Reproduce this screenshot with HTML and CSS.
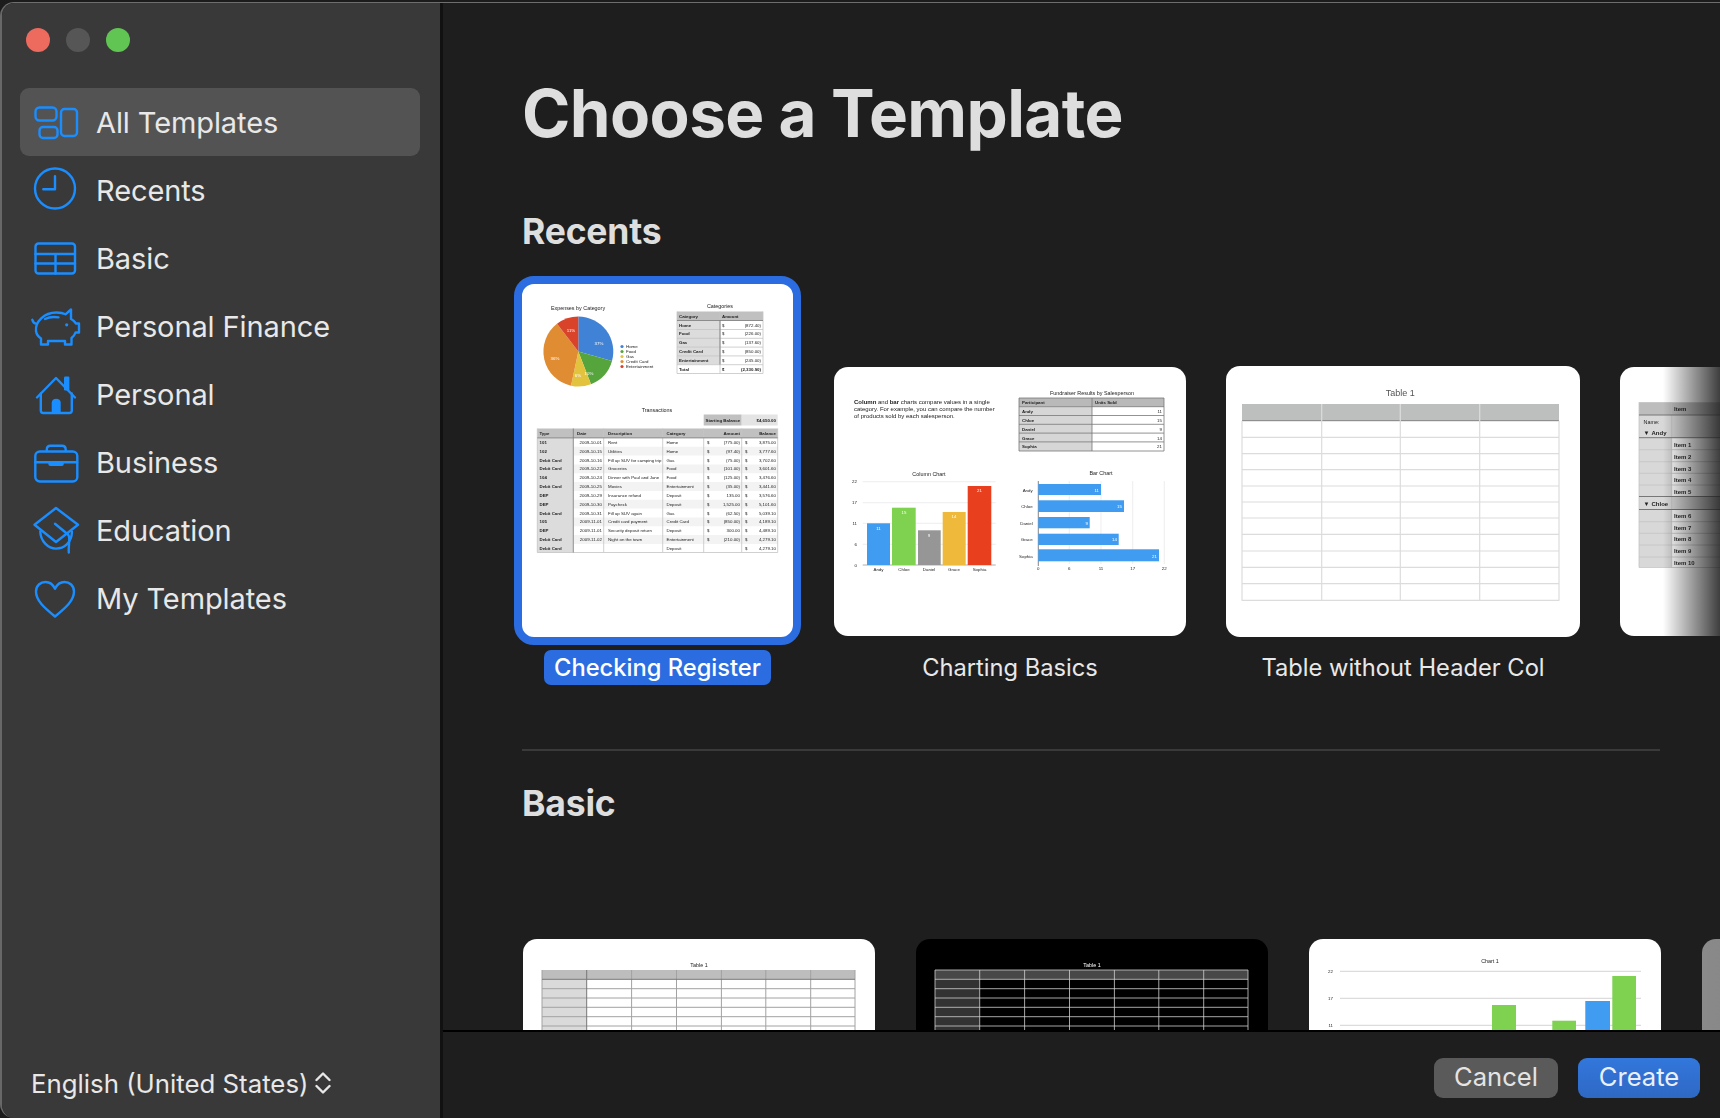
FILE: index.html
```html
<!DOCTYPE html>
<html lang="en">
<head>
<meta charset="utf-8">
<title>Choose a Template</title>
<link rel="stylesheet" href="styles.css">
</head>
<body>
<div class="window">
  <aside class="sidebar">
    <div class="lights"><span class="light red"></span><span class="light grey"></span><span class="light green"></span></div>
    <nav class="nav">
      <a class="nav-row active">
        <svg class="ico" viewBox="0 0 44 44"><rect x="1.5" y="7.5" width="21" height="13" rx="4"/><rect x="5.5" y="27" width="18" height="11" rx="3.5"/><rect x="27" y="9" width="16" height="27" rx="3.5"/></svg>
        <span>All Templates</span>
      </a>
      <a class="nav-row">
        <svg class="ico" viewBox="0 0 44 44"><circle cx="21" cy="20.5" r="20"/><path d="M21 8.2V21.2H9.3"/></svg>
        <span>Recents</span>
      </a>
      <a class="nav-row">
        <svg class="ico" viewBox="0 0 44 44"><rect x="1.5" y="7.5" width="39.5" height="30" rx="3"/><path d="M1.5 18H41M1.5 27.5H41M21.5 18V37.5"/></svg>
        <span>Basic</span>
      </a>
      <a class="nav-row">
        <svg class="ico" viewBox="0 0 44 44"><path d="M-1.7 15.8C-1 18 0 19.5 2.5 19.8M2 27C1 18 10 8.5 22.5 8.5C26 8.5 29 9 31.5 10.3L37 5.5V15C39.5 16.2 41 18 42 19.5H45V28.5H41.5C40.8 30.8 39.5 32.5 37.5 34V40.5H31V37H14V40.5H7V34.5C4 32.5 2.4 30 2 27Z"/><path d="M11 15C15 13 20 12.6 24.5 13.4"/><circle class="fill" cx="32.7" cy="20.8" r="1.6"/></svg>
        <span>Personal Finance</span>
      </a>
      <a class="nav-row">
        <svg class="ico" viewBox="0 0 44 44"><path d="M3 25.5L22 6L41 25.5"/><path d="M6.8 21.5V38.5C6.8 40.2 7.8 41 9.3 41H35.2C36.8 41 37.8 40.2 37.8 38.5V21.5"/><path class="fill" d="M17.7 41V30.8C17.7 28.4 19.7 26.8 22.2 26.8C24.7 26.8 26.7 28.4 26.7 30.8V41Z"/><rect class="fill" x="30" y="4.5" width="5.4" height="14" rx="1.2"/></svg>
        <span>Personal</span>
      </a>
      <a class="nav-row">
        <svg class="ico" viewBox="0 0 44 44"><rect x="1.3" y="11.5" width="42" height="30" rx="4.5"/><path d="M12.8 11V9.5C12.8 7 14.3 5.8 16.5 5.8H28C30.2 5.8 31.7 7 31.7 9.5V11"/><path d="M1.3 22.2H43"/><rect class="fill" x="14.3" y="21" width="15.5" height="5" rx="2"/></svg>
        <span>Business</span>
      </a>
      <a class="nav-row">
        <svg class="ico" viewBox="0 0 44 44"><path d="M22 0L44 16.8L22 34L0.5 16.8Z"/><path d="M6.3 23.5C6.5 33 14 40.6 22 40.6C30 40.6 37.5 35 38 24"/><path d="M21 15.8L34 26.5C37 29.2 34 38 34.8 44.5"/></svg>
        <span>Education</span>
      </a>
      <a class="nav-row">
        <svg class="ico" viewBox="0 0 44 44"><path d="M21 40.5C10 31.5 2 24.5 2 15.5C2 9.5 6.5 6 11.5 6C15.5 6 19 8.5 21 12.8C23 8.5 26.5 6 30.5 6C35.5 6 40 9.5 40 15.5C40 24.5 32 31.5 21 40.5Z"/></svg>
        <span>My Templates</span>
      </a>
    </nav>
    <div class="lang">
      <span>English (United States)</span>
      <svg class="updown" viewBox="0 0 16 22"><path d="M1.5 8L8 1.5L14.5 8M1.5 14L8 20.5L14.5 14"/></svg>
    </div>
  </aside>

  <main class="main">
    <div class="scroll">
      <h1 class="title">Choose a Template</h1>
      <h2 class="section">Recents</h2>
      <div class="row recents">
        <figure class="tpl selected">
          <div class="thumb">
            <svg class="art" viewBox="0 0 271 352">
              <text class="t55 c" x="56" y="25.5">Expenses by Category</text>
              <path fill="#3f82d6" d="M56.3 32A35 35 0 0 1 90 76.5L56.3 67Z"/>
              <path fill="#56a53c" d="M90 76.5A35 35 0 0 1 69 99.7L56.3 67Z"/>
              <path fill="#e3c33e" d="M69 99.7A35 35 0 0 1 49 101.2L56.3 67Z"/>
              <path fill="#e08c33" d="M49 101.2A35 35 0 0 1 35 39.3L56.3 67Z"/>
              <path fill="#d9432a" d="M35 39.3A35 35 0 0 1 56.3 32V67Z"/>
              <text class="t c w" x="77" y="60">37%</text><text class="t c w" x="67" y="90">10%</text><text class="t c w" x="56" y="92">6%</text><text class="t c w" x="33" y="75">36%</text><text class="t c w" x="49" y="47">11%</text>
              <circle cx="100" cy="62" r="1.6" fill="#3f82d6"/><circle cx="100" cy="67" r="1.6" fill="#56a53c"/><circle cx="100" cy="72" r="1.6" fill="#e3c33e"/><circle cx="100" cy="77" r="1.6" fill="#e08c33"/><circle cx="100" cy="82" r="1.6" fill="#d9432a"/>
              <text class="t" x="104" y="63.6">Home</text><text class="t" x="104" y="68.6">Food</text><text class="t" x="104" y="73.6">Gas</text><text class="t" x="104" y="78.6">Credit Card</text><text class="t" x="104" y="83.6">Entertainment</text>

              <text class="t55 c" x="198" y="23.5">Categories</text>
              <rect x="155" y="27" width="86" height="9" fill="#c0c0c0"/><rect x="155" y="36" width="43" height="44" fill="#dcdcdc"/>
              <path class="ln" d="M155 45H241M155 53.8H241M155 62.6H241M155 71.4H241M155 80.2H241M155 89H241M155 27V89M198 27V89M241 27V89"/>
              <path class="ln dk" d="M155 36H241M198 36V80"/>
              <text class="t b" x="157" y="33.3">Category</text><text class="t b" x="200" y="33.3">Amount</text>
              <g class="t b"><text x="157" y="42">Home</text><text x="157" y="50.8">Food</text><text x="157" y="59.6">Gas</text><text x="157" y="68.4">Credit Card</text><text x="157" y="77.2">Entertainment</text><text x="157" y="86">Total</text></g>
              <text class="t" x="200" y="42">$</text><text class="t e" x="239" y="42">(872.40)</text>
              <text class="t" x="200" y="50.8">$</text><text class="t e" x="239" y="50.8">(226.00)</text>
              <text class="t" x="200" y="59.6">$</text><text class="t e" x="239" y="59.6">(137.60)</text>
              <text class="t" x="200" y="68.4">$</text><text class="t e" x="239" y="68.4">(850.00)</text>
              <text class="t" x="200" y="77.2">$</text><text class="t e" x="239" y="77.2">(245.00)</text>
              <text class="t b" x="200" y="86">$</text><text class="t b e" x="239" y="86">(2,330.90)</text>

              <text class="t55 c" x="135" y="127.5">Transactions</text>
              <rect x="181.7" y="130" width="38" height="11" fill="#c0c0c0"/><rect x="219.7" y="130" width="36" height="11" fill="#e4e4e4"/>
              <text class="t b" x="183.5" y="137.3">Starting Balance</text><text class="t b e" x="254" y="137.3">$4,650.00</text>
              <rect x="15.3" y="144" width="240.4" height="9.4" fill="#c0c0c0"/><rect x="15.3" y="153.4" width="36" height="114.6" fill="#dcdcdc"/>
              <path fill="#f3f3f3" d="M51.3 162.2H255.7V171H51.3ZM51.3 179.9H255.7V188.7H51.3ZM51.3 197.5H255.7V206.4H51.3ZM51.3 215.2H255.7V224H51.3ZM51.3 232.9H255.7V241.7H51.3ZM51.3 250.5H255.7V259.4H51.3Z"/>
              <path class="ln" d="M15.3 144V268M81.7 144V268M140.7 144V268M181.7 144V268M219.7 144V268M255.7 144V268M15.3 268H255.7"/>
              <path class="ln dk" d="M15.3 153.4H255.7M51.3 144V268"/>
              <g class="t b"><text x="17.5" y="150.5">Type</text><text x="55" y="150.5">Date</text><text x="86" y="150.5">Description</text><text x="144.5" y="150.5">Category</text><text class="e" x="218" y="150.5">Amount</text><text class="e" x="254" y="150.5">Balance</text></g>
              <g transform="translate(0 159.3)"><text class="t b" x="17.5">101</text><text class="t e" x="80">2009-10-01</text><text class="t" x="86">Rent</text><text class="t" x="144.5">Home</text><text class="t" x="185">$</text><text class="t e" x="218">(775.00)</text><text class="t" x="223">$</text><text class="t e" x="254">3,875.00</text></g>
              <g transform="translate(0 168.1)"><text class="t b" x="17.5">102</text><text class="t e" x="80">2009-10-15</text><text class="t" x="86">Utilities</text><text class="t" x="144.5">Home</text><text class="t" x="185">$</text><text class="t e" x="218">(97.40)</text><text class="t" x="223">$</text><text class="t e" x="254">3,777.60</text></g>
              <g transform="translate(0 177)"><text class="t b" x="17.5">Debit Card</text><text class="t e" x="80">2009-10-16</text><text class="t" x="86">Fill up SUV for camping trip</text><text class="t" x="144.5">Gas</text><text class="t" x="185">$</text><text class="t e" x="218">(75.00)</text><text class="t" x="223">$</text><text class="t e" x="254">3,702.60</text></g>
              <g transform="translate(0 185.8)"><text class="t b" x="17.5">Debit Card</text><text class="t e" x="80">2009-10-22</text><text class="t" x="86">Groceries</text><text class="t" x="144.5">Food</text><text class="t" x="185">$</text><text class="t e" x="218">(101.00)</text><text class="t" x="223">$</text><text class="t e" x="254">3,601.60</text></g>
              <g transform="translate(0 194.6)"><text class="t b" x="17.5">104</text><text class="t e" x="80">2009-10-24</text><text class="t" x="86">Dinner with Paul and Jane</text><text class="t" x="144.5">Food</text><text class="t" x="185">$</text><text class="t e" x="218">(125.00)</text><text class="t" x="223">$</text><text class="t e" x="254">3,476.60</text></g>
              <g transform="translate(0 203.5)"><text class="t b" x="17.5">Debit Card</text><text class="t e" x="80">2009-10-25</text><text class="t" x="86">Movies</text><text class="t" x="144.5">Entertainment</text><text class="t" x="185">$</text><text class="t e" x="218">(35.00)</text><text class="t" x="223">$</text><text class="t e" x="254">3,441.60</text></g>
              <g transform="translate(0 212.3)"><text class="t b" x="17.5">DEP</text><text class="t e" x="80">2009-10-29</text><text class="t" x="86">Insurance refund</text><text class="t" x="144.5">Deposit</text><text class="t" x="185">$</text><text class="t e" x="218">135.00</text><text class="t" x="223">$</text><text class="t e" x="254">3,576.60</text></g>
              <g transform="translate(0 221.1)"><text class="t b" x="17.5">DEP</text><text class="t e" x="80">2009-10-30</text><text class="t" x="86">Paycheck</text><text class="t" x="144.5">Deposit</text><text class="t" x="185">$</text><text class="t e" x="218">1,525.00</text><text class="t" x="223">$</text><text class="t e" x="254">5,101.60</text></g>
              <g transform="translate(0 230)"><text class="t b" x="17.5">Debit Card</text><text class="t e" x="80">2009-10-31</text><text class="t" x="86">Fill up SUV again</text><text class="t" x="144.5">Gas</text><text class="t" x="185">$</text><text class="t e" x="218">(62.50)</text><text class="t" x="223">$</text><text class="t e" x="254">5,039.10</text></g>
              <g transform="translate(0 238.8)"><text class="t b" x="17.5">105</text><text class="t e" x="80">2009-11-01</text><text class="t" x="86">Credit card payment</text><text class="t" x="144.5">Credit Card</text><text class="t" x="185">$</text><text class="t e" x="218">(850.00)</text><text class="t" x="223">$</text><text class="t e" x="254">4,189.10</text></g>
              <g transform="translate(0 247.6)"><text class="t b" x="17.5">DEP</text><text class="t e" x="80">2009-11-01</text><text class="t" x="86">Security deposit return</text><text class="t" x="144.5">Deposit</text><text class="t" x="185">$</text><text class="t e" x="218">300.00</text><text class="t" x="223">$</text><text class="t e" x="254">4,489.10</text></g>
              <g transform="translate(0 256.5)"><text class="t b" x="17.5">Debit Card</text><text class="t e" x="80">2009-11-02</text><text class="t" x="86">Night on the town</text><text class="t" x="144.5">Entertainment</text><text class="t" x="185">$</text><text class="t e" x="218">(210.00)</text><text class="t" x="223">$</text><text class="t e" x="254">4,279.10</text></g>
              <g transform="translate(0 265.3)"><text class="t b" x="17.5">Debit Card</text><text class="t" x="144.5">Deposit</text><text class="t" x="223">$</text><text class="t e" x="254">4,279.10</text></g>
            </svg>
          </div>
          <figcaption class="cap">Checking Register</figcaption>
        </figure>

        <figure class="tpl">
          <div class="thumb">
            <svg class="art" viewBox="0 0 352 269">
              <text class="t6" x="20" y="36.5"><tspan class="b">Column</tspan> and <tspan class="b">bar</tspan> charts compare values in a single</text>
              <text class="t6" x="20" y="43.5">category. For example, you can compare the number</text>
              <text class="t6" x="20" y="50.5">of products sold by each salesperson.</text>
              <text class="t c t55" x="258" y="27.5">Fundraiser Results by Salesperson</text>
              <rect x="185" y="31" width="145" height="8.7" fill="#b9b9b9"/><rect x="185" y="39.7" width="73" height="44.3" fill="#d6d6d6"/>
              <path class="ln dk" d="M185 39.7H330M258 31V84M185 48.5H330M185 57.3H330M185 66.1H330M185 74.9H330M185 84H330M185 31V84M330 31V84M185 31H330"/>
              <g class="t b"><text x="188" y="37">Participant</text><text x="261" y="37">Units Sold</text><text x="188" y="46">Andy</text><text x="188" y="55">Chloe</text><text x="188" y="63.5">Daniel</text><text x="188" y="72.5">Grace</text><text x="188" y="81">Sophia</text></g>
              <g class="t e"><text x="328" y="46">11</text><text x="328" y="55">15</text><text x="328" y="63.5">9</text><text x="328" y="72.5">14</text><text x="328" y="81">21</text></g>

              <text class="t c t55" x="95" y="108.5">Column Chart</text>
              <path class="grid" d="M28.7 114.7H161.7M28.7 135.7H161.7M28.7 156.3H161.7M28.7 177.3H161.7"/>
              <path stroke="#999" stroke-width=".8" d="M28.7 198H161.7"/>
              <g class="t e"><text x="23" y="116.3">22</text><text x="23" y="137.3">17</text><text x="23" y="158">11</text><text x="23" y="179">6</text><text x="23" y="199.7">0</text></g>
              <rect x="33" y="156.3" width="23" height="41.7" fill="#3f9cf0"/><rect x="58" y="140.7" width="23.7" height="57.3" fill="#7fd24f"/><rect x="84" y="163.3" width="22.7" height="34.7" fill="#969696"/><rect x="108.7" y="145" width="23" height="53" fill="#efb93c"/><rect x="133.7" y="119" width="23.6" height="79" fill="#e8401f"/>
              <g class="t c w"><text x="44.5" y="162.5">11</text><text x="70" y="147">15</text><text x="95" y="169.5">9</text><text x="120" y="151">14</text><text x="145.5" y="125">21</text></g>
              <g class="t c"><text x="44.5" y="204">Andy</text><text x="70" y="204">Chloe</text><text x="95" y="204">Daniel</text><text x="120" y="204">Grace</text><text x="145.5" y="204">Sophia</text></g>

              <text class="t c t55" x="267" y="108">Bar Chart</text>
              <path class="grid" d="M235.3 114V197M267 114V197M298.7 114V197M330.3 114V197"/>
              <path stroke="#666" stroke-width=".8" d="M204.3 114V199"/>
              <rect x="204.3" y="117" width="62.7" height="11" fill="#3f9cf0"/><rect x="204.3" y="133.3" width="85.7" height="11.7" fill="#3f9cf0"/><rect x="204.3" y="150" width="51.4" height="11.3" fill="#3f9cf0"/><rect x="204.3" y="166.7" width="80.4" height="11.3" fill="#3f9cf0"/><rect x="204.3" y="182.3" width="120.7" height="12" fill="#3f9cf0"/>
              <g class="t e w"><text x="265" y="124.5">11</text><text x="288" y="141">15</text><text x="254" y="157.5">9</text><text x="283" y="174">14</text><text x="323" y="190.5">21</text></g>
              <g class="t e"><text x="198.7" y="124.5">Andy</text><text x="198.7" y="141">Chloe</text><text x="198.7" y="157.5">Daniel</text><text x="198.7" y="174">Grace</text><text x="198.7" y="190.5">Sophia</text></g>
              <g class="t c"><text x="204.3" y="203">0</text><text x="235.3" y="203">6</text><text x="267" y="203">11</text><text x="298.7" y="203">17</text><text x="330.3" y="203">22</text></g>
            </svg>
          </div>
          <figcaption class="cap">Charting Basics</figcaption>
        </figure>

        <figure class="tpl tall">
          <div class="thumb">
            <svg class="art" viewBox="0 0 354 271">
              <text class="t9 c" x="174.3" y="30">Table 1</text>
              <rect x="16" y="38" width="317" height="16.7" fill="#bdbfbf"/>
              <path stroke="#777" stroke-width=".9" d="M16 54.7H333"/>
              <path class="grid2" d="M16 54.7V234.7M95.7 38V234.7M174.3 38V234.7M253.7 38V234.7M333 54.7V234.7M16 71.3H333M16 87.7H333M16 103.7H333M16 120H333M16 136H333M16 152H333M16 168.3H333M16 185H333M16 201.3H333M16 217.7H333M16 234.3H333"/>
            </svg>
          </div>
          <figcaption class="cap">Table without Header Col</figcaption>
        </figure>

        <figure class="tpl fade">
          <div class="thumb">
            <svg class="art" viewBox="0 0 352 269">
              <rect x="19" y="35.3" width="32.7" height="165" fill="#d8d8d8"/>
              <rect x="19" y="35.3" width="333" height="12.7" fill="#bdbdbd"/>
              <rect x="19" y="48" width="333" height="22.7" fill="#d8d8d8"/>
              <rect x="19" y="129.5" width="333" height="13" fill="#d8d8d8"/>
              <path class="ln" d="M19 82.7H352M19 94.7H352M19 106.3H352M19 118H352M19 154.7H352M19 166.3H352M19 178H352M19 190H352M19 200.5H352M19 35.3V200.5M51.7 35.3V200.5"/>
              <path class="ln dk thick" d="M19 48H352M19 70.7H352M19 129.5H352M19 142.5H352"/>
              <text class="t6 b" x="54" y="44">Item</text>
              <text class="t55" x="23.5" y="57">Name:</text>
              <text class="t6 b" x="23.5" y="68">▼</text><text class="t6 b" x="31.5" y="68">Andy</text>
              <text class="t6 b" x="23.5" y="138.5">▼</text><text class="t6 b" x="31.5" y="138.5">Chloe</text>
              <g class="t6 b"><text x="54" y="79.5">Item 1</text><text x="54" y="92">Item 2</text><text x="54" y="103.5">Item 3</text><text x="54" y="115">Item 4</text><text x="54" y="126.5">Item 5</text><text x="54" y="151">Item 6</text><text x="54" y="162.5">Item 7</text><text x="54" y="174">Item 8</text><text x="54" y="186">Item 9</text><text x="54" y="197.5">Item 10</text></g>
            </svg>
            <div class="fade-over"></div>
          </div>
          <figcaption class="cap">Pivot Table</figcaption>
        </figure>
      </div>

      <hr class="rule">
      <h2 class="section basic">Basic</h2>

      <div class="row lower">
        <div class="thumb low">
          <svg class="art" viewBox="0 0 352 269">
            <text class="t55 c" x="176" y="28">Table 1</text>
            <rect x="19" y="31" width="313" height="9.3" fill="#bdbdbd"/>
            <rect x="19" y="40.3" width="44.7" height="60" fill="#dadada"/>
            <path class="ln md" d="M19 31V100M108.6 31V100M153.5 31V100M198.4 31V100M242.8 31V100M287.7 31V100M332 31V100M19 49.7H332M19 59H332M19 68.3H332M19 77.7H332M19 87H332"/>
            <path class="ln dk thick" d="M19 40.3H332M63.7 31V100"/>
          </svg>
        </div>
        <div class="thumb low dark">
          <svg class="art" viewBox="0 0 352 269">
            <text class="t55 c w" x="176" y="28">Table 1</text>
            <rect x="19" y="31" width="313" height="9.3" fill="#484848"/>
            <rect x="19" y="40.3" width="44.7" height="60" fill="#333"/>
            <path class="ln lt" d="M19 31H332M19 31V100M63.7 31V100M108.6 31V100M153.5 31V100M198.4 31V100M242.8 31V100M287.7 31V100M332 31V100M19 40.3H332M19 49.7H332M19 59H332M19 68.3H332M19 77.7H332M19 87H332"/>
          </svg>
        </div>
        <div class="thumb low">
          <svg class="art" viewBox="0 0 352 269">
            <text class="t55 c" x="181" y="24">Chart 1</text>
            <path class="grid2" d="M31 32.3H332M31 59.3H332M31 86.3H332"/>
            <g class="t e"><text x="24" y="34">22</text><text x="24" y="61">17</text><text x="24" y="88">11</text></g>
            <rect x="183" y="66" width="24" height="60" fill="#7fd24f"/><rect x="243.3" y="81.7" width="23.7" height="40" fill="#7fd24f"/><rect x="276.3" y="62" width="24.7" height="60" fill="#3f9cf0"/><rect x="303.3" y="37" width="23.7" height="85" fill="#7fd24f"/>
          </svg>
        </div>
        <div class="thumb low ghost"></div>
      </div>
    </div>

    <footer class="footer">
      <button class="btn cancel">Cancel</button>
      <button class="btn create">Create</button>
    </footer>
  </main>
</div>
</body>
</html>
```

FILE: styles.css
```css
* { box-sizing: border-box; }
html, body { margin: 0; height: 100%; }
body {
  background: #1c1c1c;
  overflow: hidden;
  font-family: Inter, "Liberation Sans", sans-serif;
  color: #e8e8e8;
}
.window {
  display: flex;
  height: 1116px;
  margin-top: 2px;
  border-radius: 14px 0 0 14px;
  overflow: hidden;
  border-top: 1px solid #6e6e6e;
  border-left: 2px solid #686868;
}

/* sidebar */
.sidebar {
  flex: none;
  width: 438px;
  background: #393939;
  display: flex;
  flex-direction: column;
}
.lights { display: flex; gap: 16px; padding: 25px 0 0 24px; height: 85px; }
.light { width: 24px; height: 24px; border-radius: 50%; }
.red { background: #ec6a5e; }
.grey { background: #565656; }
.green { background: #61c554; }
.nav { display: flex; flex-direction: column; padding: 0 20px 0 18px; }
.nav-row {
  display: flex;
  align-items: center;
  height: 68px;
  padding-left: 14px;
  gap: 18px;
  border-radius: 9px;
  font-size: 29px;
  letter-spacing: -.1px;
  color: #e8e8e8;
}
.active { background: #535353; }
.ico {
  flex: none;
  width: 44px;
  height: 44px;
  overflow: visible;
  fill: none;
  stroke: #1a8dff;
  stroke-width: 2.4;
  stroke-linejoin: round;
  stroke-linecap: round;
}
.ico .fill { fill: #1a8dff; stroke: none; }
.lang {
  margin-top: auto;
  display: flex;
  align-items: center;
  gap: 7px;
  height: 64px;
  padding: 0 0 6px 29px;
  font-size: 25.8px;
}
.updown { width: 16px; height: 22px; fill: none; stroke: #e8e8e8; stroke-width: 2.4; stroke-linecap: round; stroke-linejoin: round; }

/* main */
.main {
  flex: 1;
  min-width: 0;
  display: flex;
  flex-direction: column;
  background: #1e1e1e;
  border-left: 3px solid #111;
}
.scroll { flex: 1; min-height: 0; overflow: hidden; padding: 71px 60px 0 79px; }
.title {
  margin: 0 0 56px;
  font-size: 65.5px;
  line-height: 80px;
  font-weight: 700;
  letter-spacing: -.6px;
  color: #dedede;
}
.section {
  margin: 0 0 22px;
  font-size: 35.5px;
  line-height: 44px;
  font-weight: 700;
  color: #dedede;
  letter-spacing: -.2px;
}
.row { display: flex; }
.recents { align-items: flex-end; gap: 40px; margin-left: -8px; }
.tpl { margin: 0; flex: none; width: 352px; display: flex; flex-direction: column; align-items: center; }
.thumb { position: relative; flex: none; width: 352px; height: 269px; background: #fff; border-radius: 14px; overflow: hidden; }
.art { display: block; width: 100%; height: 100%; filter: blur(.42px); }
.cap {
  margin-top: 14px;
  height: 35px;
  line-height: 35px;
  font-size: 23.7px;
  color: #e8e8e8;
  white-space: nowrap;
}
.selected { width: 287px; margin-right: -7px; }
.selected .thumb { width: 287px; height: 369px; border: 8px solid #2b6de0; border-radius: 20px; }
.selected .cap { margin-top: 5px; background: #2b6de0; color: #fff; font-weight: 500; border-radius: 7px; padding: 0 10px; width: 227px; text-align: center; }
.tall { width: 354px; }
.tall .thumb { width: 354px; height: 271px; }
.tall .cap { margin-top: 13px; }
.fade .cap { visibility: hidden; }
.fade-over {
  position: absolute;
  inset: 0;
  background: linear-gradient(90deg, rgba(30,30,30,0) 43px, rgba(30,30,30,.86) 100px);
}
.rule { margin: 64px 0 0; height: 2px; border: 0; background: #3a3a3a; }
.basic { margin: 31px 0 113px; }
.lower { gap: 41px; margin-left: 1px; }
.low { height: 269px; }
.dark { background: #000; }
.ghost { background: linear-gradient(90deg, #8a8a8a, #666); }

/* thumbnail drawing */
.t, .t6, .t55, .t9 { font-family: "Liberation Sans", Arial, sans-serif; fill: #222; }
.t { font-size: 4.4px; }
.t6 { font-size: 6px; }
.t55 { font-size: 5.4px; }
.t9 { font-size: 9px; fill: #555; }
.b { font-weight: 700; }
.c { text-anchor: middle; }
.e { text-anchor: end; }
.w { fill: #fff; }
.ln { fill: none; stroke: #c4c4c4; stroke-width: .8; }
.ln.dk { stroke: #777; }
.ln.md { stroke: #a2a2a2; stroke-width: 1; }
.ln.lt { stroke: #cfcfcf; }
.thick { stroke-width: 1; }
.grid { fill: none; stroke: #e6e6e6; stroke-width: .7; }
.grid2 { fill: none; stroke: #dcdcdc; stroke-width: 1.2; }

/* footer */
.footer {
  flex: none;
  height: 88px;
  border-top: 2px solid #000;
  background: #1e1e1e;
  display: flex;
  justify-content: flex-end;
  align-items: flex-start;
  gap: 20px;
  padding: 26px 20px 0 0;
}
.btn {
  height: 40px;
  border: 0;
  border-radius: 9px;
  font-family: Inter, "Liberation Sans", sans-serif;
  font-size: 25.6px;
  line-height: 38px;
  padding: 0 0 2px;
}
.cancel { width: 124px; background: #5a5a5a; color: #e4e4e4; }
.create { width: 122px; background: linear-gradient(#3277dc, #2f68c4); color: #eaf0fb; }
```
